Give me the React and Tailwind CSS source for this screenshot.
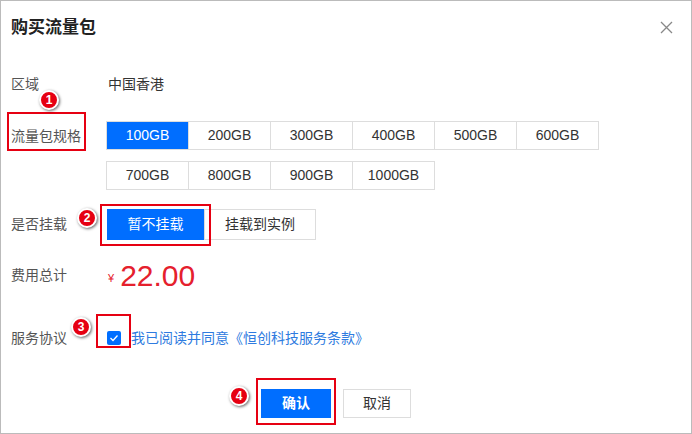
const F = { fontFamily: '"Liberation Sans","Noto Sans CJK SC",sans-serif' };

function Badge({ n, x, y }) {
  return (
    <div className="absolute flex items-center justify-center rounded-full bg-[#e60012] text-white text-[12px] font-bold border-2 border-white shadow-[1px_1px_3px_rgba(0,0,0,0.6)]"
      style={{ left: x - 10, top: y - 10, width: 20, height: 20 }}>{n}</div>
  );
}
function RedBox({ x, y, w, h }) {
  return <div className="absolute border-2 border-[#e60012]" style={{ left: x, top: y, width: w, height: h }} />;
}

export default function App() {
  const row1 = ["100GB", "200GB", "300GB", "400GB", "500GB", "600GB"];
  const row2 = ["700GB", "800GB", "900GB", "1000GB"];
  const cell = (t, i, active) => (
    <div key={t} className={`w-[83px] h-[29px] flex items-center justify-center text-[14px] border border-[#dddddd] -ml-px ${active ? "bg-[#006eff] text-white border-[#006eff]" : "bg-white text-[#333]"}`}>{t}</div>
  );
  return (
    <div style={F} className="relative w-[692px] h-[434px] bg-white border border-[#bbbbbb] text-[14px] text-[#555]">
      <div className="flex items-center justify-between pl-[10px] pr-[18px] pt-[14px]">
        <div className="text-[17px] font-bold text-[#222]">购买流量包</div>
        <svg width="13" height="13" viewBox="0 0 13 13"><path d="M1 1L12 12M12 1L1 12" stroke="#888" strokeWidth="1.3" /></svg>
      </div>
      <div className="pl-[10px]">
        <div className="flex mt-[33px]"><div className="w-[97px]">区域</div><div className="text-[#333]">中国香港</div></div>
        <div className="flex mt-[26px]">
          <div className="w-[96px] pt-[5px]">流量包规格</div>
          <div className="flex flex-col gap-[11px]">
            <div className="flex">{row1.map((t, i) => cell(t, i, i === 0))}</div>
            <div className="flex">{row2.map((t, i) => cell(t, i, false))}</div>
          </div>
        </div>
        <div className="flex items-center mt-[19px]">
          <div className="w-[96px]">是否挂载</div>
          <div className="w-[97px] h-[31px] bg-[#006eff] text-white flex items-center justify-center">暂不挂载</div>
          <div className="w-[112px] h-[31px] border border-[#dddddd] text-[#333] flex items-center justify-center">挂载到实例</div>
        </div>
        <div className="flex items-center mt-[21px]">
          <div className="w-[97px]">费用总计</div>
          <span className="text-[#e5202d] text-[11px] mt-[6px] mr-[6px]">¥</span>
          <span className="text-[#e5202d] text-[30px] leading-none">22.00</span>
        </div>
        <div className="flex items-center mt-[37px]">
          <div className="w-[96px]">服务协议</div>
          <div className="w-[14px] h-[14px] bg-[#006eff] rounded-[2px] flex items-center justify-center mr-[10px]">
            <svg width="10" height="8" viewBox="0 0 10 8"><path d="M1.5 4L4 6.5L8.5 1.5" stroke="white" strokeWidth="1.3" fill="none" /></svg>
          </div>
          <span className="text-[#2e7be0]">我已阅读并同意《恒创科技服务条款》</span>
        </div>
        <div className="flex gap-[12px] mt-[40px] ml-[250px]">
          <div className="w-[70px] h-[29px] bg-[#006eff] text-white font-bold flex items-center justify-center">确认</div>
          <div className="w-[68px] h-[29px] border border-[#dddddd] text-[#333] flex items-center justify-center">取消</div>
        </div>
      </div>
      <RedBox x={6} y={111} w={79} h={39} />
      <RedBox x={99} y={203} w={111} h={42} />
      <RedBox x={95} y={313} w={35} h={34} />
      <RedBox x={255} y={377} w={80} h={47} />
      <Badge n="1" x={48} y={99} />
      <Badge n="2" x={86} y={217} />
      <Badge n="3" x={80} y={326} />
      <Badge n="4" x={238} y={395} />
    </div>
  );
}
